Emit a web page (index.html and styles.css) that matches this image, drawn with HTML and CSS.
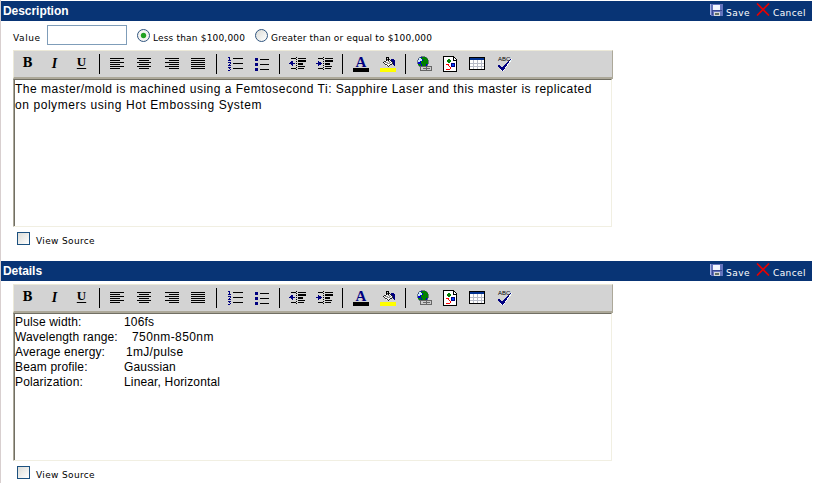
FILE: index.html
```html
<!DOCTYPE html>
<html lang="en">
<head>
<meta charset="utf-8">
<title>Description</title>
<link rel="stylesheet" href="styles.css">
</head>
<body>
<svg class="defs" xmlns="http://www.w3.org/2000/svg">
  <symbol id="left" viewBox="0 0 27 26"><path stroke="#000" d="M6 7.500h14M6 9.500h10M6 11.500h14M6 13.500h10M6 15.500h14M6 17.500h10"/></symbol>
  <symbol id="center" viewBox="0 0 27 26"><path stroke="#000" d="M6 7.500h14M8 9.500h10M6 11.500h14M8 13.500h10M6 15.500h14M8 17.500h10"/></symbol>
  <symbol id="right" viewBox="0 0 27 26"><path stroke="#000" d="M7 7.500h14M11 9.500h10M7 11.500h14M11 13.500h10M7 15.500h14M11 17.500h10"/></symbol>
  <symbol id="full" viewBox="0 0 27 26"><path stroke="#000" d="M6 7.500h14M6 9.500h14M6 11.500h14M6 13.500h14M6 15.500h14M6 17.500h14"/></symbol>
  <symbol id="ol" viewBox="0 0 27 26"><path stroke="#000" d="M12 7.500h10M12 12.500h10M12 17.500h10"/><path stroke="#000080" fill="none" d="M7 6.500h2M8.500 6v4M7 9.500h3M7 11.500h2M9.500 11v2M8 13.500h1M7 14.500h3M7 16.500h2M9.500 16v1M8 17.500h1M9.500 18v1M7 19.500h2"/></symbol>
  <symbol id="ul" viewBox="0 0 27 26"><path fill="#000080" d="M7 7h3v3h-3zM7 12h3v3h-3zM7 17h3v3h-3z"/><path stroke="#000" d="M12 8.500h9M12 13.500h9M12 18.500h9"/></symbol>
  <symbol id="outdent" viewBox="0 0 27 26"><path stroke="#000" d="M7 7.500h5M14 7.500h8M14 9.500h8M14 10.500h8M14 12.500h5M14 13.500h5M14 15.500h7M7 17.500h5M14 17.500h6"/><path stroke="#000" stroke-dasharray="1 1" d="M12.500 6v14"/><path fill="#000080" d="M5 12h1v-1h1v-1h2v2h2v1h-2v2h-1v-1h-1v-1h-2z"/></symbol>
  <symbol id="indent" viewBox="0 0 27 26"><path stroke="#000" d="M7 7.500h5M14 7.500h8M14 9.500h8M14 10.500h8M14 12.500h5M14 13.500h5M14 15.500h7M7 17.500h5M14 17.500h6"/><path stroke="#000" stroke-dasharray="1 1" d="M12.500 6v14"/><path fill="#000080" d="M5 12h2v-2h1v1h2v1h1v1h-1v1h-2v1h-1v-2h-2z"/></symbol>
  <symbol id="fill" viewBox="0 0 27 26"><path fill="#ff0" d="M6 17h16v4h-16z"/><path fill="#fff" stroke="#000" stroke-width=".8" d="M8.500 11.500l5.500-4 4.500 4-5 4z"/><path stroke="#999" d="M11 11l5 2M13 9l4 3"/><path stroke="#000" fill="none" d="M12.500 10v-4h2v4"/><path fill="#000080" d="M17 8h2l2 2v5h-1l-1-3-2-2z"/></symbol>
  <symbol id="link" viewBox="0 0 27 26"><circle cx="13" cy="11" r="5.500" fill="#0000d0" stroke="#456" stroke-width=".7"/><path fill="#008000" d="M12 6h4l2 3v4h-2v2h-4v-2h-1v-3h2v-2h-2zM8 13h3v2h-2z"/><path fill="#c8e8ff" d="M9 7h2v1h1v2h-2v1h-2v-2h1z"/><g fill="#ccc" stroke="#666"><rect x="10.500" y="15.500" width="6" height="4" rx="1"/><rect x="16.500" y="15.500" width="5" height="4" rx="1"/></g><path stroke="#666" d="M13 17.500h7"/></symbol>
  <symbol id="image" viewBox="0 0 27 26"><path fill="#fff" stroke="#000" d="M6.500 5.500h10l3 3v12h-13z"/><path fill="none" stroke="#000" d="M16.500 6v3h3"/><path fill="#008000" d="M11 8h2v1h1v2h-1v1h-2v-1h-1v-2h1z"/><path fill="#0040ff" stroke="#000080" d="M14.500 12.500h3v3h-3z"/><path stroke="red" fill="none" d="M9 13.500h2l3 4M9 18.500h4"/></symbol>
  <symbol id="table" viewBox="0 0 27 26"><path fill="#fff" stroke="#000" d="M5.500 6.500h15v12h-15z"/><path fill="#003090" d="M6 7h14v2h-14z"/><path stroke="#b8bcc8" d="M9.500 9v9M13.500 9v9M17.500 9v9M6 12.500h14M6 15.500h14"/></symbol>
  <symbol id="check" viewBox="0 0 27 26"><path fill="none" stroke="#fff" d="M9 18l3 2 9-12"/><path fill="#000080" d="M7 14h2l2 3 8-9h1l-8 12h-1l-4-5z"/></symbol>
  <symbol id="save" viewBox="0 0 13 12"><path fill="#6474bd" d="M0 0h13v12h-12l-1-1z"/><path fill="#a8b4e6" d="M0 0h1v11h-1z"/><path fill="#f2f4fc" d="M3 1h7v5h-7z"/><path fill="#38488f" d="M10 6h2v1h-9v4h-1v-5h8z"/><path fill="#d6d9dc" d="M4 8h6v4h-6z"/><path fill="#627064" d="M5 9h4v2h-4z"/></symbol>
  <symbol id="cancel" viewBox="0 0 14 13"><path fill="none" stroke="#e60000" stroke-width="1.700" d="M1 .5l12 12M13 .5l-12 12"/></symbol>
</svg>
<main class="page">
  <section class="panel">
    <header class="head"><h2>Description</h2><a class="act"><svg class="save"><use href="#save"/></svg><span>Save</span></a><a class="act"><svg class="cancel"><use href="#cancel"/></svg><span class="ca">Cancel</span></a></header>
    <div class="value"><label class="vl">Value</label><span class="field"></span><span class="radio on"></span><label class="less">Less than $100,000</label><span class="radio"></span><label class="more">Greater than or equal to $100,000</label></div>
    <div class="tools">
      <b class="t">B</b><i class="t">I</i><u class="t">U</u><hr>
      <svg><use href="#left"/></svg><svg><use href="#center"/></svg><svg><use href="#right"/></svg><svg><use href="#full"/></svg><hr>
      <svg><use href="#ol"/></svg><svg><use href="#ul"/></svg><hr>
      <svg><use href="#outdent"/></svg><svg><use href="#indent"/></svg><hr>
      <span class="color">A</span><svg><use href="#fill"/></svg><hr>
      <svg><use href="#link"/></svg><svg><use href="#image"/></svg><svg><use href="#table"/></svg><span class="spell"><svg><use href="#check"/></svg><span>ABC</span></span>
    </div>
    <div class="editor"><p><span>The master/mold is machined using a Femtosecond Ti: Sapphire Laser and this master is replicated</span><br><span class="l2">on polymers using Hot Embossing System</span></p></div>
    <div class="source"><span class="box"></span><label>View Source</label></div>
  </section>
  <section class="panel details">
    <header class="head"><h2>Details</h2><a class="act"><svg class="save"><use href="#save"/></svg><span>Save</span></a><a class="act"><svg class="cancel"><use href="#cancel"/></svg><span class="ca">Cancel</span></a></header>
    <div class="tools">
      <b class="t">B</b><i class="t">I</i><u class="t">U</u><hr>
      <svg><use href="#left"/></svg><svg><use href="#center"/></svg><svg><use href="#right"/></svg><svg><use href="#full"/></svg><hr>
      <svg><use href="#ol"/></svg><svg><use href="#ul"/></svg><hr>
      <svg><use href="#outdent"/></svg><svg><use href="#indent"/></svg><hr>
      <span class="color">A</span><svg><use href="#fill"/></svg><hr>
      <svg><use href="#link"/></svg><svg><use href="#image"/></svg><svg><use href="#table"/></svg><span class="spell"><svg><use href="#check"/></svg><span>ABC</span></span>
    </div>
    <div class="editor"><dl>
      <dt>Pulse width:</dt><dd>106fs</dd>
      <dt>Wavelength range:</dt><dd class="wave">750nm-850nm</dd>
      <dt>Average energy:</dt><dd class="energy">1mJ/pulse</dd>
      <dt>Beam profile:</dt><dd>Gaussian</dd>
      <dt>Polarization:</dt><dd>Linear, Horizontal</dd>
    </dl></div>
    <div class="source"><span class="box"></span><label>View Source</label></div>
  </section>
</main>
</body>
</html>
```
FILE: styles.css
```css
* { box-sizing: border-box; }
body { margin: 0; background: #fff; color: #000; overflow: hidden; font: 9px/12px "DejaVu Sans", sans-serif; }
.defs { display: none; }
.page { width: 812px; height: 483px; border-left: 1px solid #d8cfcf; padding-top: 1px; overflow: hidden; }
.panel { height: 260px; }
.head { height: 20px; background: #083475; color: #fff; display: flex; align-items: flex-start; padding-left: 2px; }
h2 { margin: 0; font: bold 12px/21px "Liberation Sans", sans-serif; width: 707px; letter-spacing: -.05px; }
.act { display: flex; width: 46px; white-space: nowrap; }
.save { width: 13px; height: 12px; margin-top: 3px; shape-rendering: crispEdges; flex: none; }
.cancel { width: 14px; height: 13px; margin-top: 2px; flex: none; }
.act span { margin: 6px 0 0 3px; letter-spacing: .5px; }
.act .ca { margin-left: 3px; letter-spacing: .4px; }
.value { height: 29px; display: flex; align-items: flex-start; padding-left: 12px; white-space: nowrap; }
.value label { margin-top: 11px; letter-spacing: .18px; }
.value .vl { width: 34px; letter-spacing: .6px; }
.field { width: 80px; height: 20px; margin-top: 4px; border: 1px solid #7f9db9; }
.radio { width: 13px; height: 13px; margin: 8px 0 0 10px; border: 1px solid #30557f; border-radius: 50%; background: linear-gradient(135deg, #dcdcd7, #fff); flex: none; }
.radio.on { background: radial-gradient(circle, #21a121 0 2.2px, #f4f4f2 3.2px); }
.less { margin-left: 3px; width: 92px; }
.more { margin-left: 3px; }
.less + .radio { margin-left: 10px; }
.tools { width: 600px; height: 29px; margin-left: 12px; border: solid; border-width: 1px 1px 2px; border-color: #ece9d8 #aca899 #aca899 #ece9d8; background: #d3d3d3; display: flex; }
.tools svg, .t, .color, .spell { width: 27px; height: 26px; flex: none; shape-rendering: crispEdges; }
.tools hr { width: 1px; height: 20px; margin: 3px 4px; border: 0; background: #000; flex: none; }
.t { font: bold 12px/25px "DejaVu Serif", serif; text-align: center; }
i.t { font: italic bold 14px/25px "Liberation Serif", serif; }
u.t { font: bold 13px/22px "Liberation Serif", serif; text-underline-offset: 2px; }
.tools .color { height: 20px; border-bottom: 4px solid #000; width: 16px; margin: 1px 5px 0 6px; color: #000080; font: bold 15px/21px "Liberation Serif", serif; text-align: center; }
.spell { position: relative; }
.spell span { position: absolute; left: 7px; top: 4px; font: 6px/8px "Liberation Sans", sans-serif; }
.editor { width: 599px; height: 148px; margin-left: 12px; border: 1px solid #f1efe2; border-top-color: #716f64; border-left: 1px solid #aca899; box-shadow: inset 1px 0 #716f64; }
.editor p { margin: 1px 0 0 1px; font: 12px/16px "Liberation Sans", sans-serif; white-space: nowrap; letter-spacing: .5px; }
.l2 { letter-spacing: .57px; }
.source { display: flex; padding-left: 16px; }
.box { width: 13px; height: 13px; margin-top: 5px; border: 1px solid #1c5180; background: linear-gradient(135deg, #dcdcd7, #fff); }
.source label { margin: 8px 0 0 6px; letter-spacing: .35px; }
.details .tools { margin-top: 3px; }
dl { margin: 1px 0 0 1px; display: grid; grid-template-columns: 109px auto; font: 12px/15px "Liberation Sans", sans-serif; white-space: nowrap; letter-spacing: .15px; }
dd { margin: 0; }
.wave { padding-left: 8px; letter-spacing: .4px; }
.energy { padding-left: 2px; letter-spacing: .3px; }
```
